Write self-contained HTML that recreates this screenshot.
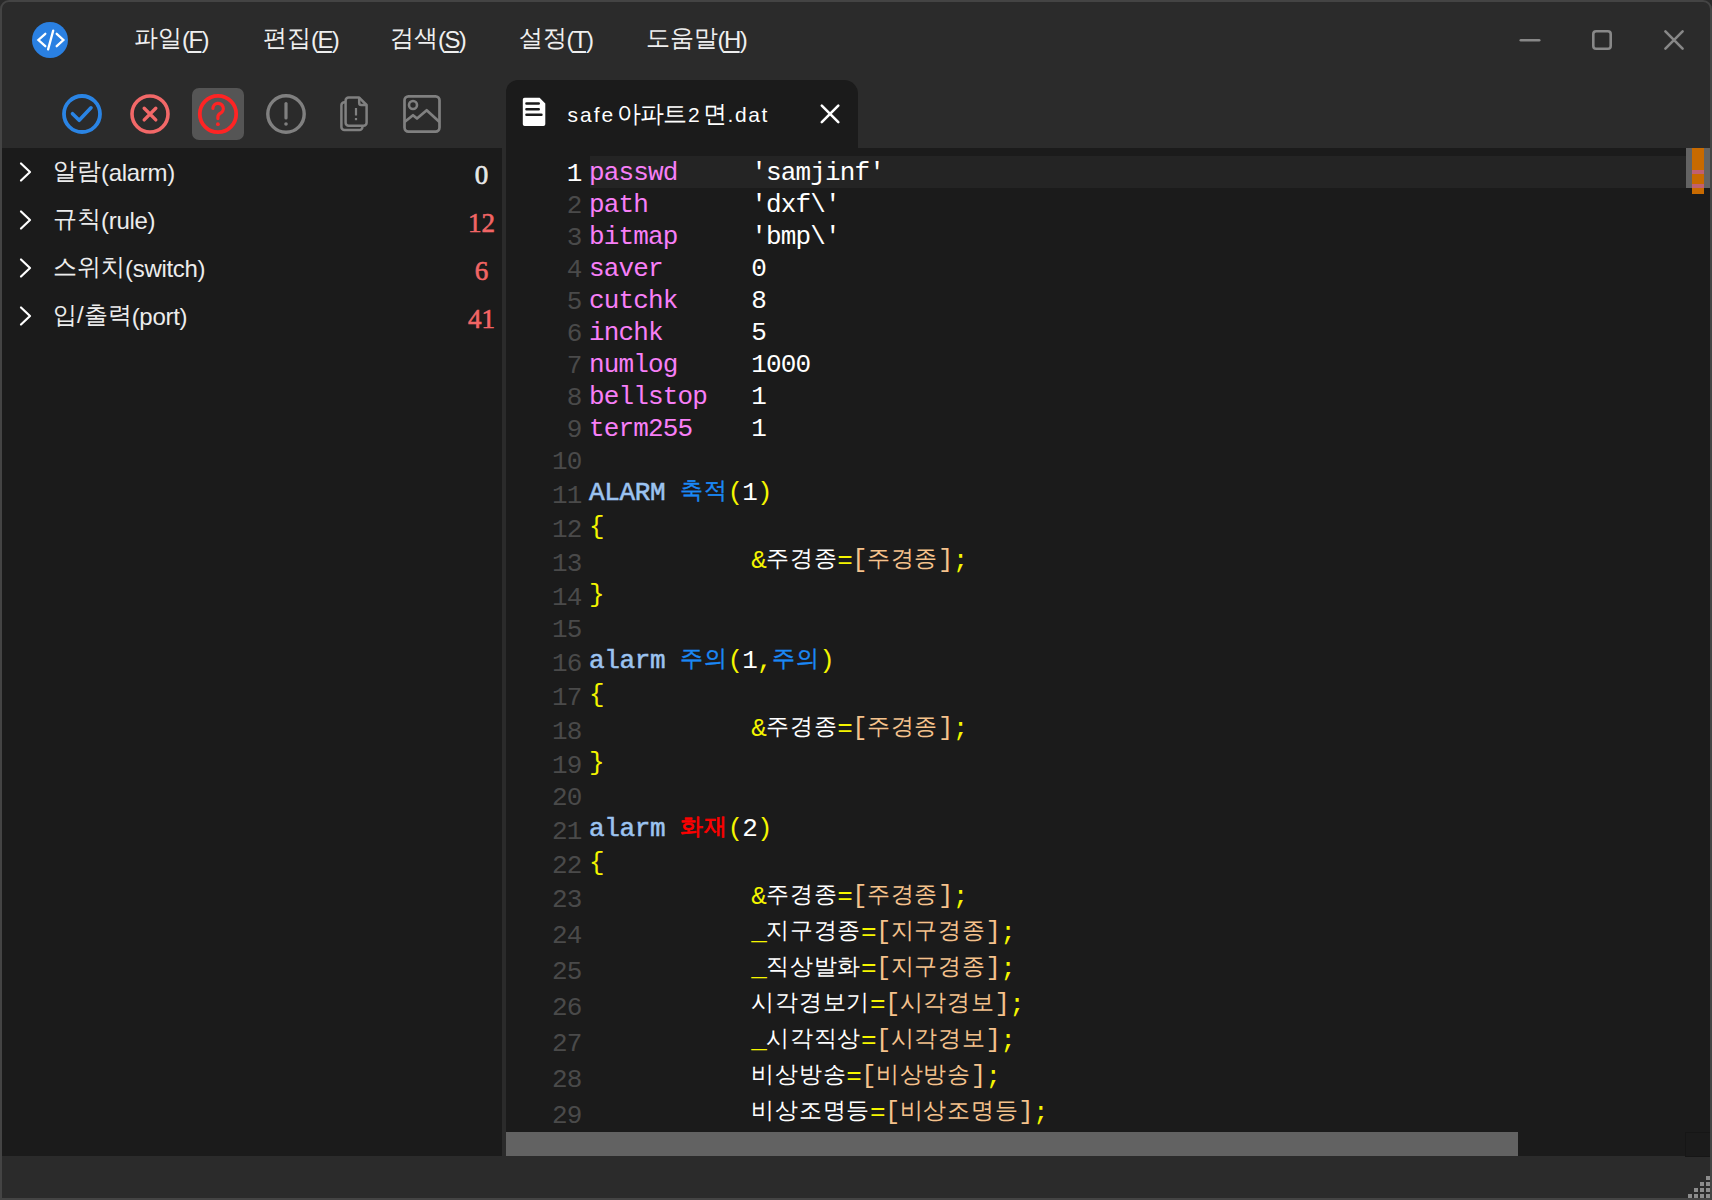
<!DOCTYPE html>
<html><head><meta charset="utf-8"><style>
html,body{margin:0;padding:0;width:1712px;height:1200px;overflow:hidden;background:#2a2a2a;}
.a{position:absolute;display:block;}
.t{position:absolute;white-space:pre;}
.menu{font-family:'Liberation Sans',sans-serif;font-size:24px;line-height:40px;color:#efefef;}
.menu u{text-decoration:underline;text-decoration-thickness:2px;text-underline-offset:3px;}
.side{font-family:'Liberation Sans',sans-serif;font-size:24px;line-height:40px;color:#ececec;}
.cnt{font-family:'Liberation Serif',serif;font-size:27px;-webkit-text-stroke:0.6px currentColor;line-height:40px;text-align:center;}
</style></head><body>
<div class="a" style="left:0;top:0;width:1708px;height:1196px;border:2px solid #444444;border-radius:9px 9px 0 0;background:#2b2b2b;"></div>
<!-- logo -->
<svg class="a" style="left:30px;top:20px" width="40" height="40" viewBox="0 0 40 40">
 <circle cx="20" cy="20" r="18" fill="#2a80e2"/>
 <path d="M15.3 13.8 L8.4 20 L15.3 26.2 M26.7 13.8 L33.4 20 L26.7 26.2 M23.2 10.6 L18.1 29.4" fill="none" stroke="#fff" stroke-width="2.3" stroke-linecap="round" stroke-linejoin="miter"/>
</svg>
<div class="t menu" style="left:134px;top:18px;">파일<span style="letter-spacing:-1.6px;position:relative;top:2px">(<u>F</u>)</span></div><div class="t menu" style="left:263px;top:18px;">편집<span style="letter-spacing:-1.6px;position:relative;top:2px">(<u>E</u>)</span></div><div class="t menu" style="left:390px;top:18px;">검색<span style="letter-spacing:-1.6px;position:relative;top:2px">(<u>S</u>)</span></div><div class="t menu" style="left:518.5px;top:18px;">설정<span style="letter-spacing:-1.6px;position:relative;top:2px">(<u>T</u>)</span></div><div class="t menu" style="left:645.5px;top:18px;">도움말<span style="letter-spacing:-1.6px;position:relative;top:2px">(<u>H</u>)</span></div>
<!-- window controls -->
<svg class="a" style="left:1500px;top:20px" width="200" height="40" viewBox="1500 20 200 40">
 <path d="M1520.8 40.2 H1539.2" stroke="#888888" stroke-width="2.6" stroke-linecap="round"/>
 <rect x="1593.3" y="31.3" width="17.4" height="17.4" rx="2.8" fill="none" stroke="#888888" stroke-width="2.6"/>
 <path d="M1665.4 31.4 L1682.6 48.6 M1682.6 31.4 L1665.4 48.6" stroke="#888888" stroke-width="2.6" stroke-linecap="round"/>
</svg>
<!-- toolbar -->
<div class="a" style="left:192px;top:88px;width:52px;height:52px;border-radius:7px;background:#555555"></div>
<svg class="a" style="left:50px;top:84px" width="420" height="60" viewBox="50 84 420 60">
 <circle cx="82" cy="114" r="18" fill="none" stroke="#2a84e4" stroke-width="3.8"/>
 <path d="M72.5 113.7 L79.2 120.3 L91 107.8" fill="none" stroke="#2a84e4" stroke-width="3.6" stroke-linecap="round" stroke-linejoin="round"/>
 <circle cx="150" cy="114" r="18" fill="none" stroke="#f26868" stroke-width="3.6"/>
 <path d="M144.2 108.3 L155.8 119.9 M155.8 108.3 L144.2 119.9" fill="none" stroke="#f26868" stroke-width="3.4" stroke-linecap="round"/>
 <circle cx="218" cy="114" r="18.2" fill="none" stroke="#ff2424" stroke-width="3.8"/>
 <path d="M212.9 108.4 A5.2 5.2 0 1 1 220.4 113.2 Q217.9 114.5 217.9 117 V118.6" fill="none" stroke="#ff2424" stroke-width="3.2" stroke-linecap="round" stroke-linejoin="round"/>
 <circle cx="217.9" cy="124.2" r="1.9" fill="#ff2424"/>
 <circle cx="286" cy="114" r="18.2" fill="none" stroke="#808080" stroke-width="3.4"/>
 <path d="M286 103.5 V118" stroke="#808080" stroke-width="3.2" stroke-linecap="round"/>
 <circle cx="286" cy="124" r="1.8" fill="#808080"/>
 <path d="M345.6 102.3 H344.4 A3 3 0 0 0 341.4 105.3 V127 A3 3 0 0 0 344.4 130 H359.4 A3 3 0 0 0 362.4 127 V126" fill="none" stroke="#808080" stroke-width="2.5"/>
 <path d="M348.6 97.6 H359.2 L366.6 105 V122.8 A3 3 0 0 1 363.6 125.8 H348.6 A3 3 0 0 1 345.6 122.8 V100.6 A3 3 0 0 1 348.6 97.6 Z" fill="none" stroke="#808080" stroke-width="2.5" stroke-linejoin="round"/>
 <path d="M359.2 97.6 V103 A2 2 0 0 0 361.2 105 H366.6" fill="none" stroke="#808080" stroke-width="2.5" stroke-linejoin="round"/>
 <path d="M356 108 V115.5" stroke="#808080" stroke-width="2.2"/>
 <rect x="354.9" y="118" width="2.2" height="2.2" fill="#808080"/>
 <rect x="404.5" y="96.3" width="35" height="35.3" rx="4" fill="none" stroke="#808080" stroke-width="2.7"/>
 <circle cx="413" cy="105" r="4" fill="none" stroke="#808080" stroke-width="2.6"/>
 <path d="M404.5 122 L413 115.2 L417 118.5 L426.7 110.2 L439.5 122" fill="none" stroke="#808080" stroke-width="2.7" stroke-linejoin="round"/>
</svg>
<!-- sidebar panel -->
<div class="a" style="left:2px;top:148px;width:500px;height:1008px;background:#1b1b1b"></div>
<svg class="a" style="left:14px;top:158px" width="24" height="28" viewBox="0 0 24 28"><path d="M7 5.5 L16 14 L7 22.5" fill="none" stroke="#fff" stroke-width="2.2" stroke-linecap="round" stroke-linejoin="round"/></svg><div class="t side" style="left:53px;top:151px;">알람<span style="position:relative;top:2px;letter-spacing:-0.3px">(alarm)</span></div><div class="t cnt" style="left:441px;width:81px;top:155px;color:#e8e8e8">0</div><svg class="a" style="left:14px;top:206px" width="24" height="28" viewBox="0 0 24 28"><path d="M7 5.5 L16 14 L7 22.5" fill="none" stroke="#fff" stroke-width="2.2" stroke-linecap="round" stroke-linejoin="round"/></svg><div class="t side" style="left:53px;top:199px;">규칙<span style="position:relative;top:2px;letter-spacing:-0.3px">(rule)</span></div><div class="t cnt" style="left:441px;width:81px;top:203px;color:#f26565">12</div><svg class="a" style="left:14px;top:254px" width="24" height="28" viewBox="0 0 24 28"><path d="M7 5.5 L16 14 L7 22.5" fill="none" stroke="#fff" stroke-width="2.2" stroke-linecap="round" stroke-linejoin="round"/></svg><div class="t side" style="left:53px;top:247px;">스위치<span style="position:relative;top:2px;letter-spacing:-0.3px">(switch)</span></div><div class="t cnt" style="left:441px;width:81px;top:251px;color:#f26565">6</div><svg class="a" style="left:14px;top:302px" width="24" height="28" viewBox="0 0 24 28"><path d="M7 5.5 L16 14 L7 22.5" fill="none" stroke="#fff" stroke-width="2.2" stroke-linecap="round" stroke-linejoin="round"/></svg><div class="t side" style="left:53px;top:295px;">입/출력<span style="position:relative;top:2px;letter-spacing:-0.3px">(port)</span></div><div class="t cnt" style="left:441px;width:81px;top:299px;color:#f26565">41</div>
<!-- tab -->
<div class="a" style="left:506px;top:80px;width:352px;height:80px;border-radius:12px 14px 0 0;background:#1b1b1b"></div>
<svg class="a" style="left:520px;top:96px" width="28" height="32" viewBox="520 96 28 32">
 <path d="M524.6 97.8 H539.6 L545.3 103.4 V124.3 A1.8 1.8 0 0 1 543.5 126 H524.6 A1.8 1.8 0 0 1 522.8 124.3 V99.6 A1.8 1.8 0 0 1 524.6 97.8 Z" fill="#ffffff"/>
 <path d="M526.5 103.5 H538.7 M526.5 109.2 H538.7 M526.5 114.7 H541.4" stroke="#1b1b1b" stroke-width="2.6" stroke-linecap="round"/>
</svg>
<div class="t" style="left:567.50px;top:95px;font-family:'Liberation Sans', sans-serif;font-size:21px;line-height:40px;color:#ffffff;letter-spacing:2.0px;">safe</div><div class="t" style="left:616.50px;top:94px;font-family:'Liberation Sans', sans-serif;font-size:24px;line-height:40px;color:#ffffff;letter-spacing:-0.7px;">아파트</div><div class="t" style="left:688.00px;top:95px;font-family:'Liberation Sans', sans-serif;font-size:21px;line-height:40px;color:#ffffff;letter-spacing:0px;">2</div><div class="t" style="left:702.50px;top:94px;font-family:'Liberation Sans', sans-serif;font-size:24px;line-height:40px;color:#ffffff;letter-spacing:0px;">면</div><div class="t" style="left:727.50px;top:95px;font-family:'Liberation Sans', sans-serif;font-size:21px;line-height:40px;color:#ffffff;letter-spacing:1.6px;">.dat</div>
<svg class="a" style="left:816px;top:100px" width="28" height="28" viewBox="816 100 28 28">
 <path d="M821.8 105.7 L838.3 122.1 M838.3 105.7 L821.8 122.1" stroke="#fff" stroke-width="2.6" stroke-linecap="round"/>
</svg>
<!-- editor -->
<div class="a" style="left:506px;top:148px;width:1204px;height:1008px;background:#1b1b1b"></div>
<div class="a" style="left:590px;top:156px;width:1096px;height:32px;background:#242424"></div>
<div class="t" style="left:566.75px;top:154px;font-family:'Liberation Mono', monospace;font-size:26px;line-height:40px;color:#ffffff;letter-spacing:-0.85px;">1</div><div class="t" style="left:589.00px;top:153px;font-family:'Liberation Mono', monospace;font-size:26px;line-height:40px;color:#f77ff7;letter-spacing:-0.85px;">passwd</div><div class="t" style="left:751.25px;top:153px;font-family:'Liberation Mono', monospace;font-size:26px;line-height:40px;color:#ffffff;letter-spacing:-0.85px;">&#x27;samjinf&#x27;</div><div class="t" style="left:566.75px;top:186px;font-family:'Liberation Mono', monospace;font-size:26px;line-height:40px;color:#4a4a4a;letter-spacing:-0.85px;">2</div><div class="t" style="left:589.00px;top:185px;font-family:'Liberation Mono', monospace;font-size:26px;line-height:40px;color:#f77ff7;letter-spacing:-0.85px;">path</div><div class="t" style="left:751.25px;top:185px;font-family:'Liberation Mono', monospace;font-size:26px;line-height:40px;color:#ffffff;letter-spacing:-0.85px;">&#x27;dxf\&#x27;</div><div class="t" style="left:566.75px;top:218px;font-family:'Liberation Mono', monospace;font-size:26px;line-height:40px;color:#4a4a4a;letter-spacing:-0.85px;">3</div><div class="t" style="left:589.00px;top:217px;font-family:'Liberation Mono', monospace;font-size:26px;line-height:40px;color:#f77ff7;letter-spacing:-0.85px;">bitmap</div><div class="t" style="left:751.25px;top:217px;font-family:'Liberation Mono', monospace;font-size:26px;line-height:40px;color:#ffffff;letter-spacing:-0.85px;">&#x27;bmp\&#x27;</div><div class="t" style="left:566.75px;top:250px;font-family:'Liberation Mono', monospace;font-size:26px;line-height:40px;color:#4a4a4a;letter-spacing:-0.85px;">4</div><div class="t" style="left:589.00px;top:249px;font-family:'Liberation Mono', monospace;font-size:26px;line-height:40px;color:#f77ff7;letter-spacing:-0.85px;">saver</div><div class="t" style="left:751.25px;top:249px;font-family:'Liberation Mono', monospace;font-size:26px;line-height:40px;color:#ffffff;letter-spacing:-0.85px;">0</div><div class="t" style="left:566.75px;top:282px;font-family:'Liberation Mono', monospace;font-size:26px;line-height:40px;color:#4a4a4a;letter-spacing:-0.85px;">5</div><div class="t" style="left:589.00px;top:281px;font-family:'Liberation Mono', monospace;font-size:26px;line-height:40px;color:#f77ff7;letter-spacing:-0.85px;">cutchk</div><div class="t" style="left:751.25px;top:281px;font-family:'Liberation Mono', monospace;font-size:26px;line-height:40px;color:#ffffff;letter-spacing:-0.85px;">8</div><div class="t" style="left:566.75px;top:314px;font-family:'Liberation Mono', monospace;font-size:26px;line-height:40px;color:#4a4a4a;letter-spacing:-0.85px;">6</div><div class="t" style="left:589.00px;top:313px;font-family:'Liberation Mono', monospace;font-size:26px;line-height:40px;color:#f77ff7;letter-spacing:-0.85px;">inchk</div><div class="t" style="left:751.25px;top:313px;font-family:'Liberation Mono', monospace;font-size:26px;line-height:40px;color:#ffffff;letter-spacing:-0.85px;">5</div><div class="t" style="left:566.75px;top:346px;font-family:'Liberation Mono', monospace;font-size:26px;line-height:40px;color:#4a4a4a;letter-spacing:-0.85px;">7</div><div class="t" style="left:589.00px;top:345px;font-family:'Liberation Mono', monospace;font-size:26px;line-height:40px;color:#f77ff7;letter-spacing:-0.85px;">numlog</div><div class="t" style="left:751.25px;top:345px;font-family:'Liberation Mono', monospace;font-size:26px;line-height:40px;color:#ffffff;letter-spacing:-0.85px;">1000</div><div class="t" style="left:566.75px;top:378px;font-family:'Liberation Mono', monospace;font-size:26px;line-height:40px;color:#4a4a4a;letter-spacing:-0.85px;">8</div><div class="t" style="left:589.00px;top:377px;font-family:'Liberation Mono', monospace;font-size:26px;line-height:40px;color:#f77ff7;letter-spacing:-0.85px;">bellstop</div><div class="t" style="left:751.25px;top:377px;font-family:'Liberation Mono', monospace;font-size:26px;line-height:40px;color:#ffffff;letter-spacing:-0.85px;">1</div><div class="t" style="left:566.75px;top:410px;font-family:'Liberation Mono', monospace;font-size:26px;line-height:40px;color:#4a4a4a;letter-spacing:-0.85px;">9</div><div class="t" style="left:589.00px;top:409px;font-family:'Liberation Mono', monospace;font-size:26px;line-height:40px;color:#f77ff7;letter-spacing:-0.85px;">term255</div><div class="t" style="left:751.25px;top:409px;font-family:'Liberation Mono', monospace;font-size:26px;line-height:40px;color:#ffffff;letter-spacing:-0.85px;">1</div><div class="t" style="left:552.00px;top:442px;font-family:'Liberation Mono', monospace;font-size:26px;line-height:40px;color:#4a4a4a;letter-spacing:-0.85px;">10</div><div class="t" style="left:552.00px;top:476px;font-family:'Liberation Mono', monospace;font-size:26px;line-height:40px;color:#4a4a4a;letter-spacing:-0.85px;">11</div><div class="t" style="left:589.00px;top:473px;font-family:'Liberation Mono', monospace;font-size:26px;line-height:40px;color:#9cc3f0;letter-spacing:-0.35px;-webkit-text-stroke:0.55px currentColor;">ALARM</div><div class="t" style="left:680.00px;top:472px;font-family:'Liberation Mono', monospace;font-size:22.5px;line-height:40px;color:#1a88f5;letter-spacing:0.75px;-webkit-text-stroke:0.35px currentColor;">축적</div><div class="t" style="left:727.50px;top:473px;font-family:'Liberation Mono', monospace;font-size:26px;line-height:40px;color:#f5f500;letter-spacing:-0.85px;">(</div><div class="t" style="left:742.25px;top:473px;font-family:'Liberation Mono', monospace;font-size:26px;line-height:40px;color:#ffffff;letter-spacing:-0.85px;">1</div><div class="t" style="left:757.00px;top:473px;font-family:'Liberation Mono', monospace;font-size:26px;line-height:40px;color:#f5f500;letter-spacing:-0.85px;">)</div><div class="t" style="left:552.00px;top:510px;font-family:'Liberation Mono', monospace;font-size:26px;line-height:40px;color:#4a4a4a;letter-spacing:-0.85px;">12</div><div class="t" style="left:589.00px;top:507px;font-family:'Liberation Mono', monospace;font-size:26px;line-height:40px;color:#f5f500;letter-spacing:-0.85px;">{</div><div class="t" style="left:552.00px;top:544px;font-family:'Liberation Mono', monospace;font-size:26px;line-height:40px;color:#4a4a4a;letter-spacing:-0.85px;">13</div><div class="t" style="left:751.25px;top:541px;font-family:'Liberation Mono', monospace;font-size:26px;line-height:40px;color:#f5f500;letter-spacing:-0.85px;">&amp;</div><div class="t" style="left:766.00px;top:540px;font-family:'Liberation Mono', monospace;font-size:22.5px;line-height:40px;color:#ffffff;letter-spacing:0.75px;">주경종</div><div class="t" style="left:837.25px;top:541px;font-family:'Liberation Mono', monospace;font-size:26px;line-height:40px;color:#f5f500;letter-spacing:-0.85px;">=</div><div class="t" style="left:852.00px;top:539.5px;font-family:'Liberation Mono', monospace;font-size:26px;line-height:40px;color:#f5c28c;letter-spacing:-0.85px;">[</div><div class="t" style="left:866.75px;top:540px;font-family:'Liberation Mono', monospace;font-size:22.5px;line-height:40px;color:#f5c28c;letter-spacing:0.75px;">주경종</div><div class="t" style="left:938.00px;top:539.5px;font-family:'Liberation Mono', monospace;font-size:26px;line-height:40px;color:#f5c28c;letter-spacing:-0.85px;">]</div><div class="t" style="left:952.75px;top:541px;font-family:'Liberation Mono', monospace;font-size:26px;line-height:40px;color:#f5f500;letter-spacing:-0.85px;">;</div><div class="t" style="left:552.00px;top:578px;font-family:'Liberation Mono', monospace;font-size:26px;line-height:40px;color:#4a4a4a;letter-spacing:-0.85px;">14</div><div class="t" style="left:589.00px;top:575px;font-family:'Liberation Mono', monospace;font-size:26px;line-height:40px;color:#f5f500;letter-spacing:-0.85px;">}</div><div class="t" style="left:552.00px;top:610px;font-family:'Liberation Mono', monospace;font-size:26px;line-height:40px;color:#4a4a4a;letter-spacing:-0.85px;">15</div><div class="t" style="left:552.00px;top:644px;font-family:'Liberation Mono', monospace;font-size:26px;line-height:40px;color:#4a4a4a;letter-spacing:-0.85px;">16</div><div class="t" style="left:589.00px;top:641px;font-family:'Liberation Mono', monospace;font-size:26px;line-height:40px;color:#9cc3f0;letter-spacing:-0.35px;-webkit-text-stroke:0.55px currentColor;">alarm</div><div class="t" style="left:680.00px;top:640px;font-family:'Liberation Mono', monospace;font-size:22.5px;line-height:40px;color:#1a88f5;letter-spacing:0.75px;-webkit-text-stroke:0.35px currentColor;">주의</div><div class="t" style="left:727.50px;top:641px;font-family:'Liberation Mono', monospace;font-size:26px;line-height:40px;color:#f5f500;letter-spacing:-0.85px;">(</div><div class="t" style="left:742.25px;top:641px;font-family:'Liberation Mono', monospace;font-size:26px;line-height:40px;color:#ffffff;letter-spacing:-0.85px;">1</div><div class="t" style="left:757.00px;top:641px;font-family:'Liberation Mono', monospace;font-size:26px;line-height:40px;color:#f5f500;letter-spacing:-0.85px;">,</div><div class="t" style="left:771.75px;top:640px;font-family:'Liberation Mono', monospace;font-size:22.5px;line-height:40px;color:#1a88f5;letter-spacing:0.75px;-webkit-text-stroke:0.35px currentColor;">주의</div><div class="t" style="left:819.25px;top:641px;font-family:'Liberation Mono', monospace;font-size:26px;line-height:40px;color:#f5f500;letter-spacing:-0.85px;">)</div><div class="t" style="left:552.00px;top:678px;font-family:'Liberation Mono', monospace;font-size:26px;line-height:40px;color:#4a4a4a;letter-spacing:-0.85px;">17</div><div class="t" style="left:589.00px;top:675px;font-family:'Liberation Mono', monospace;font-size:26px;line-height:40px;color:#f5f500;letter-spacing:-0.85px;">{</div><div class="t" style="left:552.00px;top:712px;font-family:'Liberation Mono', monospace;font-size:26px;line-height:40px;color:#4a4a4a;letter-spacing:-0.85px;">18</div><div class="t" style="left:751.25px;top:709px;font-family:'Liberation Mono', monospace;font-size:26px;line-height:40px;color:#f5f500;letter-spacing:-0.85px;">&amp;</div><div class="t" style="left:766.00px;top:708px;font-family:'Liberation Mono', monospace;font-size:22.5px;line-height:40px;color:#ffffff;letter-spacing:0.75px;">주경종</div><div class="t" style="left:837.25px;top:709px;font-family:'Liberation Mono', monospace;font-size:26px;line-height:40px;color:#f5f500;letter-spacing:-0.85px;">=</div><div class="t" style="left:852.00px;top:707.5px;font-family:'Liberation Mono', monospace;font-size:26px;line-height:40px;color:#f5c28c;letter-spacing:-0.85px;">[</div><div class="t" style="left:866.75px;top:708px;font-family:'Liberation Mono', monospace;font-size:22.5px;line-height:40px;color:#f5c28c;letter-spacing:0.75px;">주경종</div><div class="t" style="left:938.00px;top:707.5px;font-family:'Liberation Mono', monospace;font-size:26px;line-height:40px;color:#f5c28c;letter-spacing:-0.85px;">]</div><div class="t" style="left:952.75px;top:709px;font-family:'Liberation Mono', monospace;font-size:26px;line-height:40px;color:#f5f500;letter-spacing:-0.85px;">;</div><div class="t" style="left:552.00px;top:746px;font-family:'Liberation Mono', monospace;font-size:26px;line-height:40px;color:#4a4a4a;letter-spacing:-0.85px;">19</div><div class="t" style="left:589.00px;top:743px;font-family:'Liberation Mono', monospace;font-size:26px;line-height:40px;color:#f5f500;letter-spacing:-0.85px;">}</div><div class="t" style="left:552.00px;top:778px;font-family:'Liberation Mono', monospace;font-size:26px;line-height:40px;color:#4a4a4a;letter-spacing:-0.85px;">20</div><div class="t" style="left:552.00px;top:812px;font-family:'Liberation Mono', monospace;font-size:26px;line-height:40px;color:#4a4a4a;letter-spacing:-0.85px;">21</div><div class="t" style="left:589.00px;top:809px;font-family:'Liberation Mono', monospace;font-size:26px;line-height:40px;color:#9cc3f0;letter-spacing:-0.35px;-webkit-text-stroke:0.55px currentColor;">alarm</div><div class="t" style="left:680.00px;top:808px;font-family:'Liberation Mono', monospace;font-size:22.5px;line-height:40px;color:#ff0000;letter-spacing:0.75px;-webkit-text-stroke:0.7px currentColor;">화재</div><div class="t" style="left:727.50px;top:809px;font-family:'Liberation Mono', monospace;font-size:26px;line-height:40px;color:#f5f500;letter-spacing:-0.85px;">(</div><div class="t" style="left:742.25px;top:809px;font-family:'Liberation Mono', monospace;font-size:26px;line-height:40px;color:#ffffff;letter-spacing:-0.85px;">2</div><div class="t" style="left:757.00px;top:809px;font-family:'Liberation Mono', monospace;font-size:26px;line-height:40px;color:#f5f500;letter-spacing:-0.85px;">)</div><div class="t" style="left:552.00px;top:846px;font-family:'Liberation Mono', monospace;font-size:26px;line-height:40px;color:#4a4a4a;letter-spacing:-0.85px;">22</div><div class="t" style="left:589.00px;top:843px;font-family:'Liberation Mono', monospace;font-size:26px;line-height:40px;color:#f5f500;letter-spacing:-0.85px;">{</div><div class="t" style="left:552.00px;top:880px;font-family:'Liberation Mono', monospace;font-size:26px;line-height:40px;color:#4a4a4a;letter-spacing:-0.85px;">23</div><div class="t" style="left:751.25px;top:877px;font-family:'Liberation Mono', monospace;font-size:26px;line-height:40px;color:#f5f500;letter-spacing:-0.85px;">&amp;</div><div class="t" style="left:766.00px;top:876px;font-family:'Liberation Mono', monospace;font-size:22.5px;line-height:40px;color:#ffffff;letter-spacing:0.75px;">주경종</div><div class="t" style="left:837.25px;top:877px;font-family:'Liberation Mono', monospace;font-size:26px;line-height:40px;color:#f5f500;letter-spacing:-0.85px;">=</div><div class="t" style="left:852.00px;top:875.5px;font-family:'Liberation Mono', monospace;font-size:26px;line-height:40px;color:#f5c28c;letter-spacing:-0.85px;">[</div><div class="t" style="left:866.75px;top:876px;font-family:'Liberation Mono', monospace;font-size:22.5px;line-height:40px;color:#f5c28c;letter-spacing:0.75px;">주경종</div><div class="t" style="left:938.00px;top:875.5px;font-family:'Liberation Mono', monospace;font-size:26px;line-height:40px;color:#f5c28c;letter-spacing:-0.85px;">]</div><div class="t" style="left:952.75px;top:877px;font-family:'Liberation Mono', monospace;font-size:26px;line-height:40px;color:#f5f500;letter-spacing:-0.85px;">;</div><div class="t" style="left:552.00px;top:916px;font-family:'Liberation Mono', monospace;font-size:26px;line-height:40px;color:#4a4a4a;letter-spacing:-0.85px;">24</div><div class="t" style="left:751.25px;top:911.5px;font-family:'Liberation Mono', monospace;font-size:26px;line-height:40px;color:#f5f500;letter-spacing:-0.85px;">_</div><div class="t" style="left:766.00px;top:912px;font-family:'Liberation Mono', monospace;font-size:22.5px;line-height:40px;color:#ffffff;letter-spacing:0.75px;">지구경종</div><div class="t" style="left:861.00px;top:913px;font-family:'Liberation Mono', monospace;font-size:26px;line-height:40px;color:#f5f500;letter-spacing:-0.85px;">=</div><div class="t" style="left:875.75px;top:911.5px;font-family:'Liberation Mono', monospace;font-size:26px;line-height:40px;color:#f5c28c;letter-spacing:-0.85px;">[</div><div class="t" style="left:890.50px;top:912px;font-family:'Liberation Mono', monospace;font-size:22.5px;line-height:40px;color:#f5c28c;letter-spacing:0.75px;">지구경종</div><div class="t" style="left:985.50px;top:911.5px;font-family:'Liberation Mono', monospace;font-size:26px;line-height:40px;color:#f5c28c;letter-spacing:-0.85px;">]</div><div class="t" style="left:1000.25px;top:913px;font-family:'Liberation Mono', monospace;font-size:26px;line-height:40px;color:#f5f500;letter-spacing:-0.85px;">;</div><div class="t" style="left:552.00px;top:952px;font-family:'Liberation Mono', monospace;font-size:26px;line-height:40px;color:#4a4a4a;letter-spacing:-0.85px;">25</div><div class="t" style="left:751.25px;top:947.5px;font-family:'Liberation Mono', monospace;font-size:26px;line-height:40px;color:#f5f500;letter-spacing:-0.85px;">_</div><div class="t" style="left:766.00px;top:948px;font-family:'Liberation Mono', monospace;font-size:22.5px;line-height:40px;color:#ffffff;letter-spacing:0.75px;">직상발화</div><div class="t" style="left:861.00px;top:949px;font-family:'Liberation Mono', monospace;font-size:26px;line-height:40px;color:#f5f500;letter-spacing:-0.85px;">=</div><div class="t" style="left:875.75px;top:947.5px;font-family:'Liberation Mono', monospace;font-size:26px;line-height:40px;color:#f5c28c;letter-spacing:-0.85px;">[</div><div class="t" style="left:890.50px;top:948px;font-family:'Liberation Mono', monospace;font-size:22.5px;line-height:40px;color:#f5c28c;letter-spacing:0.75px;">지구경종</div><div class="t" style="left:985.50px;top:947.5px;font-family:'Liberation Mono', monospace;font-size:26px;line-height:40px;color:#f5c28c;letter-spacing:-0.85px;">]</div><div class="t" style="left:1000.25px;top:949px;font-family:'Liberation Mono', monospace;font-size:26px;line-height:40px;color:#f5f500;letter-spacing:-0.85px;">;</div><div class="t" style="left:552.00px;top:988px;font-family:'Liberation Mono', monospace;font-size:26px;line-height:40px;color:#4a4a4a;letter-spacing:-0.85px;">26</div><div class="t" style="left:751.25px;top:984px;font-family:'Liberation Mono', monospace;font-size:22.5px;line-height:40px;color:#ffffff;letter-spacing:0.75px;">시각경보기</div><div class="t" style="left:870.00px;top:985px;font-family:'Liberation Mono', monospace;font-size:26px;line-height:40px;color:#f5f500;letter-spacing:-0.85px;">=</div><div class="t" style="left:884.75px;top:983.5px;font-family:'Liberation Mono', monospace;font-size:26px;line-height:40px;color:#f5c28c;letter-spacing:-0.85px;">[</div><div class="t" style="left:899.50px;top:984px;font-family:'Liberation Mono', monospace;font-size:22.5px;line-height:40px;color:#f5c28c;letter-spacing:0.75px;">시각경보</div><div class="t" style="left:994.50px;top:983.5px;font-family:'Liberation Mono', monospace;font-size:26px;line-height:40px;color:#f5c28c;letter-spacing:-0.85px;">]</div><div class="t" style="left:1009.25px;top:985px;font-family:'Liberation Mono', monospace;font-size:26px;line-height:40px;color:#f5f500;letter-spacing:-0.85px;">;</div><div class="t" style="left:552.00px;top:1024px;font-family:'Liberation Mono', monospace;font-size:26px;line-height:40px;color:#4a4a4a;letter-spacing:-0.85px;">27</div><div class="t" style="left:751.25px;top:1019.5px;font-family:'Liberation Mono', monospace;font-size:26px;line-height:40px;color:#f5f500;letter-spacing:-0.85px;">_</div><div class="t" style="left:766.00px;top:1020px;font-family:'Liberation Mono', monospace;font-size:22.5px;line-height:40px;color:#ffffff;letter-spacing:0.75px;">시각직상</div><div class="t" style="left:861.00px;top:1021px;font-family:'Liberation Mono', monospace;font-size:26px;line-height:40px;color:#f5f500;letter-spacing:-0.85px;">=</div><div class="t" style="left:875.75px;top:1019.5px;font-family:'Liberation Mono', monospace;font-size:26px;line-height:40px;color:#f5c28c;letter-spacing:-0.85px;">[</div><div class="t" style="left:890.50px;top:1020px;font-family:'Liberation Mono', monospace;font-size:22.5px;line-height:40px;color:#f5c28c;letter-spacing:0.75px;">시각경보</div><div class="t" style="left:985.50px;top:1019.5px;font-family:'Liberation Mono', monospace;font-size:26px;line-height:40px;color:#f5c28c;letter-spacing:-0.85px;">]</div><div class="t" style="left:1000.25px;top:1021px;font-family:'Liberation Mono', monospace;font-size:26px;line-height:40px;color:#f5f500;letter-spacing:-0.85px;">;</div><div class="t" style="left:552.00px;top:1060px;font-family:'Liberation Mono', monospace;font-size:26px;line-height:40px;color:#4a4a4a;letter-spacing:-0.85px;">28</div><div class="t" style="left:751.25px;top:1056px;font-family:'Liberation Mono', monospace;font-size:22.5px;line-height:40px;color:#ffffff;letter-spacing:0.75px;">비상방송</div><div class="t" style="left:846.25px;top:1057px;font-family:'Liberation Mono', monospace;font-size:26px;line-height:40px;color:#f5f500;letter-spacing:-0.85px;">=</div><div class="t" style="left:861.00px;top:1055.5px;font-family:'Liberation Mono', monospace;font-size:26px;line-height:40px;color:#f5c28c;letter-spacing:-0.85px;">[</div><div class="t" style="left:875.75px;top:1056px;font-family:'Liberation Mono', monospace;font-size:22.5px;line-height:40px;color:#f5c28c;letter-spacing:0.75px;">비상방송</div><div class="t" style="left:970.75px;top:1055.5px;font-family:'Liberation Mono', monospace;font-size:26px;line-height:40px;color:#f5c28c;letter-spacing:-0.85px;">]</div><div class="t" style="left:985.50px;top:1057px;font-family:'Liberation Mono', monospace;font-size:26px;line-height:40px;color:#f5f500;letter-spacing:-0.85px;">;</div><div class="t" style="left:552.00px;top:1096px;font-family:'Liberation Mono', monospace;font-size:26px;line-height:40px;color:#4a4a4a;letter-spacing:-0.85px;">29</div><div class="t" style="left:751.25px;top:1092px;font-family:'Liberation Mono', monospace;font-size:22.5px;line-height:40px;color:#ffffff;letter-spacing:0.75px;">비상조명등</div><div class="t" style="left:870.00px;top:1093px;font-family:'Liberation Mono', monospace;font-size:26px;line-height:40px;color:#f5f500;letter-spacing:-0.85px;">=</div><div class="t" style="left:884.75px;top:1091.5px;font-family:'Liberation Mono', monospace;font-size:26px;line-height:40px;color:#f5c28c;letter-spacing:-0.85px;">[</div><div class="t" style="left:899.50px;top:1092px;font-family:'Liberation Mono', monospace;font-size:22.5px;line-height:40px;color:#f5c28c;letter-spacing:0.75px;">비상조명등</div><div class="t" style="left:1018.25px;top:1091.5px;font-family:'Liberation Mono', monospace;font-size:26px;line-height:40px;color:#f5c28c;letter-spacing:-0.85px;">]</div><div class="t" style="left:1033.00px;top:1093px;font-family:'Liberation Mono', monospace;font-size:26px;line-height:40px;color:#f5f500;letter-spacing:-0.85px;">;</div>
<!-- vertical scroll marker -->
<div class="a" style="left:1686px;top:148px;width:24px;height:40px;background:#636363"></div>
<div class="a" style="left:1692px;top:148px;width:12px;height:46px;background:#c86a00"></div>
<div class="a" style="left:1692px;top:170px;width:12px;height:4px;background:#c06070"></div>
<div class="a" style="left:1692px;top:184px;width:12px;height:4px;background:#c06070"></div>
<!-- horizontal scrollbar -->
<div class="a" style="left:506px;top:1132px;width:1204px;height:24px;background:#1b1b1b"></div>
<div class="a" style="left:506px;top:1132px;width:1012px;height:24px;background:#626262"></div>
<div class="a" style="left:1685px;top:1132px;width:24px;height:23px;border:1px solid #161616;border-right:0;background:#1b1b1b"></div>
<!-- size grip -->
<svg class="a" style="left:1680px;top:1170px" width="32" height="30" viewBox="1680 1170 32 30">
 <g fill="#8c8c8c">
  <rect x="1706" y="1176" width="4" height="4"/>
  <rect x="1700" y="1182" width="4" height="4"/><rect x="1706" y="1182" width="4" height="4"/>
  <rect x="1694" y="1188" width="4" height="4"/><rect x="1700" y="1188" width="4" height="4"/><rect x="1706" y="1188" width="4" height="4"/>
  <rect x="1688" y="1194" width="4" height="4"/><rect x="1694" y="1194" width="4" height="4"/><rect x="1700" y="1194" width="4" height="4"/><rect x="1706" y="1194" width="4" height="4"/>
 </g>
</svg>
</body></html>
